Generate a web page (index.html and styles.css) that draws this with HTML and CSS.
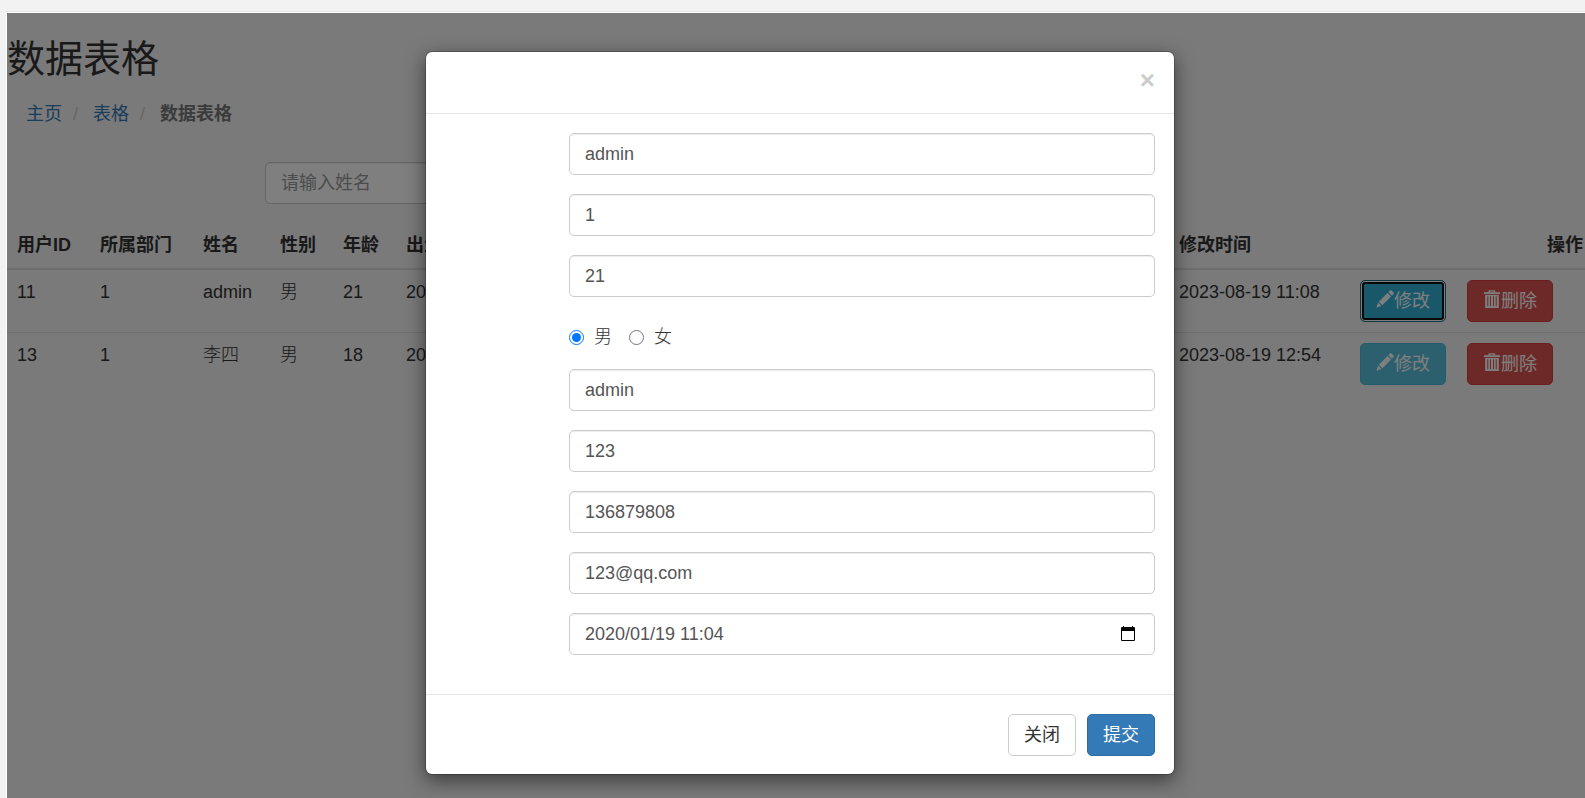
FILE: index.html
```html
<!DOCTYPE html>
<html lang="zh-CN">
<head>
<meta charset="utf-8">
<meta name="viewport" content="width=device-width, initial-scale=1">
<title>数据表格</title>
<link rel="stylesheet" href="styles.css">
</head>
<body>
<svg class="sprite" aria-hidden="true">
  <symbol id="icon-pencil" viewBox="0 0 18 18">
    <path fill="currentColor" d="M14 .6c.5-.5 1-.5 1.500 0l2 2c.5.5.5 1 0 1.500l-1.600 1.600-3.500-3.500zM11.500 3.100l3.500 3.500-8.600 8.600-3.500-3.500zM2.100 12.600l3.300 3.300L.4 17.700z"/>
  </symbol>
  <symbol id="icon-trash" viewBox="0 0 18 18">
    <path fill="none" stroke="currentColor" stroke-width="1.400" d="M6.300 2.200V.9h5.200v1.300"/>
    <path fill="currentColor" d="M1 2.200h16v1.900H1z"/>
    <path fill="currentColor" fill-rule="evenodd" d="M2.200 5h13.600v13H2.200zM4.300 6.300v9.900h1V6.300zM7 6.300v9.900h1V6.300zM10 6.300v9.900h1V6.300zM12.700 6.300v9.900h1V6.300z"/>
  </symbol>
</svg>

<div class="frame">
  <main class="page">
    <h2 class="page-title">数据表格</h2>
    <nav aria-label="breadcrumb">
      <ol class="breadcrumb">
        <li><a href="#">主页</a></li>
        <li><a href="#">表格</a></li>
        <li class="current"><strong>数据表格</strong></li>
      </ol>
    </nav>
    <form class="search">
      <input class="control" type="text" placeholder="请输入姓名" aria-label="请输入姓名">
    </form>
    <table class="table">
      <colgroup>
        <col class="col-id"><col class="col-dept"><col class="col-name"><col class="col-sex"><col class="col-age"><col><col class="col-time"><col class="col-actions">
      </colgroup>
      <thead>
        <tr><th>用户ID</th><th>所属部门</th><th>姓名</th><th>性别</th><th>年龄</th><th>出生日期</th><th>修改时间</th><th class="actions-head">操作</th></tr>
      </thead>
      <tbody>
        <tr>
          <td>11</td><td>1</td><td>admin</td><td>男</td><td>21</td><td>2020-01-19</td><td>2023-08-19 11:08</td>
          <td><div class="actions">
            <button type="button" class="btn btn-info is-focused"><svg class="icon"><use href="#icon-pencil"/></svg>修改</button>
            <button type="button" class="btn btn-danger"><svg class="icon"><use href="#icon-trash"/></svg>删除</button>
          </div></td>
        </tr>
        <tr>
          <td>13</td><td>1</td><td>李四</td><td>男</td><td>18</td><td>2020-01-19</td><td>2023-08-19 12:54</td>
          <td><div class="actions">
            <button type="button" class="btn btn-info"><svg class="icon"><use href="#icon-pencil"/></svg>修改</button>
            <button type="button" class="btn btn-danger"><svg class="icon"><use href="#icon-trash"/></svg>删除</button>
          </div></td>
        </tr>
      </tbody>
    </table>
  </main>

  <div class="backdrop">
    <div class="modal" role="dialog" aria-modal="true">
      <header class="modal-header">
        <button type="button" class="close" aria-label="关闭">×</button>
      </header>
      <form class="modal-body">
        <div class="field"><input class="control" type="text" value="admin" aria-label="姓名"></div>
        <div class="field"><input class="control" type="text" value="1" aria-label="所属部门"></div>
        <div class="field"><input class="control" type="text" value="21" aria-label="年龄"></div>
        <div class="field radios">
          <label class="radio"><input type="radio" name="sex" checked>男</label>
          <label class="radio"><input type="radio" name="sex">女</label>
        </div>
        <div class="field"><input class="control" type="text" value="admin" aria-label="账号"></div>
        <div class="field"><input class="control" type="text" value="123" aria-label="密码"></div>
        <div class="field"><input class="control" type="text" value="136879808" aria-label="电话"></div>
        <div class="field"><input class="control" type="text" value="123@qq.com" aria-label="邮箱"></div>
        <div class="field date-field">
          <input class="control" type="text" value="2020/01/19 11:04" aria-label="出生日期">
          <button type="button" class="picker" aria-label="选择日期">
            <svg viewBox="0 0 14 15" class="picker-icon"><path fill="#000" fill-rule="evenodd" d="M0 2q0-1 1-1h1V0h1v1h8V0h1v1h1q1 0 1 1v12q0 1-1 1H1q-1 0-1-1zM1 5v9h12V5z"/></svg>
          </button>
        </div>
      </form>
      <footer class="modal-footer">
        <button type="button" class="btn btn-default">关闭</button>
        <button type="button" class="btn btn-primary">提交</button>
      </footer>
    </div>
  </div>
</div>
</body>
</html>
```

FILE: styles.css
```css
* { box-sizing: border-box; }

html, body { height: 100%; }

body {
  margin: 0;
  padding: 11px 0 0 6px;
  background: #f2f2f2;
  color: #333;
  font: 300 18px/25px "Liberation Sans", "Noto Sans CJK SC", sans-serif;
  overflow: hidden;
}

button, input { font: inherit; }

.sprite { position: absolute; width: 0; height: 0; }

.frame {
  position: relative;
  height: 100%;
  border-top: 1px solid #e6e6e6;
  background: #fff;
  overflow: hidden;
}

.page {
  min-height: 100%;
  margin: 1px 0 0 1px;
  background: #f4f4f4;
  padding: 26px 0 0;
}

.page-title {
  margin: 0;
  font-size: 38px;
  line-height: 41px;
  font-weight: 400;
}

.breadcrumb {
  display: flex;
  margin: 12px 0 25px;
  padding: 10px 19px;
  list-style: none;
  font-weight: 400;
}

.breadcrumb li + li::before {
  content: "/";
  padding: 0 15px 0 11px;
  color: #ccc;
}

.breadcrumb a { color: #337ab7; text-decoration: none; }
.breadcrumb .current { color: #777; }
.breadcrumb strong { font-weight: 700; }

.search { margin: 0 0 19px 258px; }
.search .control { width: 260px; }

.control {
  display: block;
  width: 100%;
  height: 42px;
  padding: 7px 15px;
  color: #555;
  background: #fff;
  border: 1px solid #ccc;
  border-radius: 5px;
  box-shadow: inset 0 1px 1px rgba(0, 0, 0, .075);
  outline: none;
  font-weight: 400;
}

.control::placeholder { color: #999; opacity: 1; }

.table {
  width: 100%;
  table-layout: fixed;
  border-collapse: separate;
  border-spacing: 0;
}

.table th, .table td {
  padding: 10px;
  text-align: left;
  vertical-align: top;
  white-space: nowrap;
}

.table th { border-bottom: 2px solid #ddd; font-weight: 700; }
.table tr + tr td { border-top: 1px solid #ddd; }
.table .actions-head { padding-right: 2px; text-align: right; }

.col-id { width: 83px; }
.col-dept { width: 103px; }
.col-name { width: 77px; }
.col-sex, .col-age { width: 63px; }
.col-time { width: 181px; }
.col-actions { width: 235px; }

.actions { display: flex; gap: 21px; }

.btn {
  display: inline-flex;
  align-items: center;
  height: 42px;
  padding: 0 15px;
  border: 1px solid transparent;
  border-radius: 5px;
  color: #fff;
  font-weight: 400;
}

.btn-info { background: #5bc0de; border-color: #46b8da; }
.btn-danger { background: #d9534f; border-color: #d43f3a; }
.btn-primary { background: #337ab7; border-color: #2e6da4; }
.btn-default { background: #fff; border-color: #ccc; color: #333; }

.btn-info.is-focused {
  background: #31b0d5;
  border-color: #1b6d85;
  box-shadow: inset 0 0 0 1px #fff, inset 0 0 0 3px #101010;
}

.icon { width: 18px; height: 18px; margin-bottom: 4px; }

.backdrop {
  position: absolute;
  inset: 1px 0 0 1px;
  padding: 38px 0 0 8px;
  background: rgba(0, 0, 0, .5);
}

.modal {
  width: 750px;
  max-width: 100%;
  margin: 0 auto;
  background: #fff;
  background-clip: padding-box;
  border: 1px solid rgba(0, 0, 0, .2);
  border-radius: 7px;
  box-shadow: 0 6px 19px rgba(0, 0, 0, .5);
}

.modal-header {
  display: flex;
  justify-content: flex-end;
  padding: 17px 19px 21px;
  border-bottom: 1px solid #e5e5e5;
}

.close {
  padding: 0;
  border: 0;
  background: none;
  color: #ccc;
  font-size: 26px;
  line-height: 23px;
  height: 23px;
  font-weight: bold;
}

.modal-body { padding: 19px 19px 0; }

.field { margin: 0 0 19px 124px; }

.radios {
  display: flex;
  gap: 17px;
  height: 34px;
  padding-top: 9px;
}

.radio { display: flex; align-items: center; gap: 10px; }
.radio input { width: 15px; height: 15px; margin: 0; }

.date-field { position: relative; }

.picker {
  position: absolute;
  top: 13px;
  right: 20px;
  width: 14px;
  height: 15px;
  padding: 0;
  border: 0;
  background: none;
}

.picker-icon { display: block; width: 14px; height: 15px; }

.modal-footer {
  display: flex;
  justify-content: flex-end;
  gap: 11px;
  margin-top: 39px;
  padding: 19px 19px 18px;
  border-top: 1px solid #e5e5e5;
}
```
